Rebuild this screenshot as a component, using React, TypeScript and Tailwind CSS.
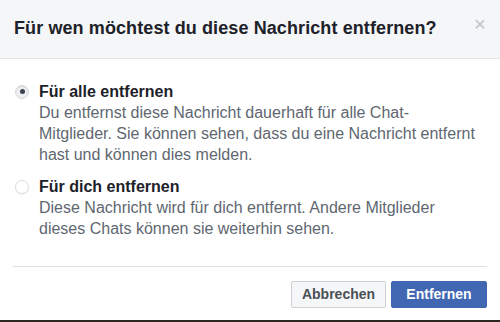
export default function App() {
  const options = [
    {
      label: 'Für alle entfernen',
      lines: ['Du entfernst diese Nachricht dauerhaft für alle Chat-', 'Mitglieder. Sie können sehen, dass du eine Nachricht entfernt', 'hast und können dies melden.'],
      checked: true,
    },
    {
      label: 'Für dich entfernen',
      lines: ['Diese Nachricht wird für dich entfernt. Andere Mitglieder', 'dieses Chats können sie weiterhin sehen.'],
      checked: false,
    },
  ];

  return (
    <div className="flex h-[322px] w-[500px] flex-col overflow-hidden bg-[#2a2620] font-['Liberation_Sans',Arial,sans-serif]">
      <div className="flex flex-1 flex-col bg-white">
        <header className="flex h-[59px] items-center justify-between border-b border-[#e5e5e5] bg-[#f5f6f7] pl-[14px] pr-[14px]">
          <h1 className="pb-[2px] text-[18px] font-bold tracking-[0.1px] text-[#1d2129]">
            Für wen möchtest du diese Nachricht entfernen?
          </h1>
          <span className="mb-[12px] text-[21px] leading-none text-[#bec2c9]">×</span>
        </header>

        <div className="flex flex-col gap-[11px] px-[15px] pt-[22px]">
          {options.map((opt) => (
            <label key={opt.label} className="flex gap-[10px]">
              <span className="flex h-[21px] items-center">
                <span
                  className={
                    opt.checked
                      ? 'flex h-[14px] w-[14px] items-center justify-center rounded-full border border-[#d6d8dc] bg-[#eceef1] shadow-[inset_0_1px_1px_rgba(0,0,0,0.08)]'
                      : 'h-[14px] w-[14px] rounded-full border border-[#dadde1] bg-white shadow-[0_1px_1px_rgba(0,0,0,0.06)]'
                  }
                >
                  {opt.checked && <span className="h-[5px] w-[5px] rounded-full bg-[#3b4250]" />}
                </span>
              </span>
              <div className="text-[16px] leading-[21px]">
                <div className="font-bold text-[#1d2129]">{opt.label}</div>
                {opt.lines.map((l) => (
                  <div key={l} className="text-[#606770]">
                    {l}
                  </div>
                ))}
              </div>
            </label>
          ))}
        </div>

        <div className="mx-[13px] mt-[27px] border-t border-[#dddfe2]" />

        <div className="flex justify-end gap-[5px] pr-[13px] pt-[14px]">
          <button className="h-[27px] w-[95px] rounded-[2px] border border-[#ced0d4] bg-[#f5f6f7] text-[14px] font-bold text-[#4b4f56]">
            Abbrechen
          </button>
          <button className="h-[27px] w-[96px] rounded-[2px] border border-[#4267b2] bg-[#4267b2] text-[14px] font-bold text-white">
            Entfernen
          </button>
        </div>
      </div>
      <div className="h-[2px]" />
    </div>
  );
}
